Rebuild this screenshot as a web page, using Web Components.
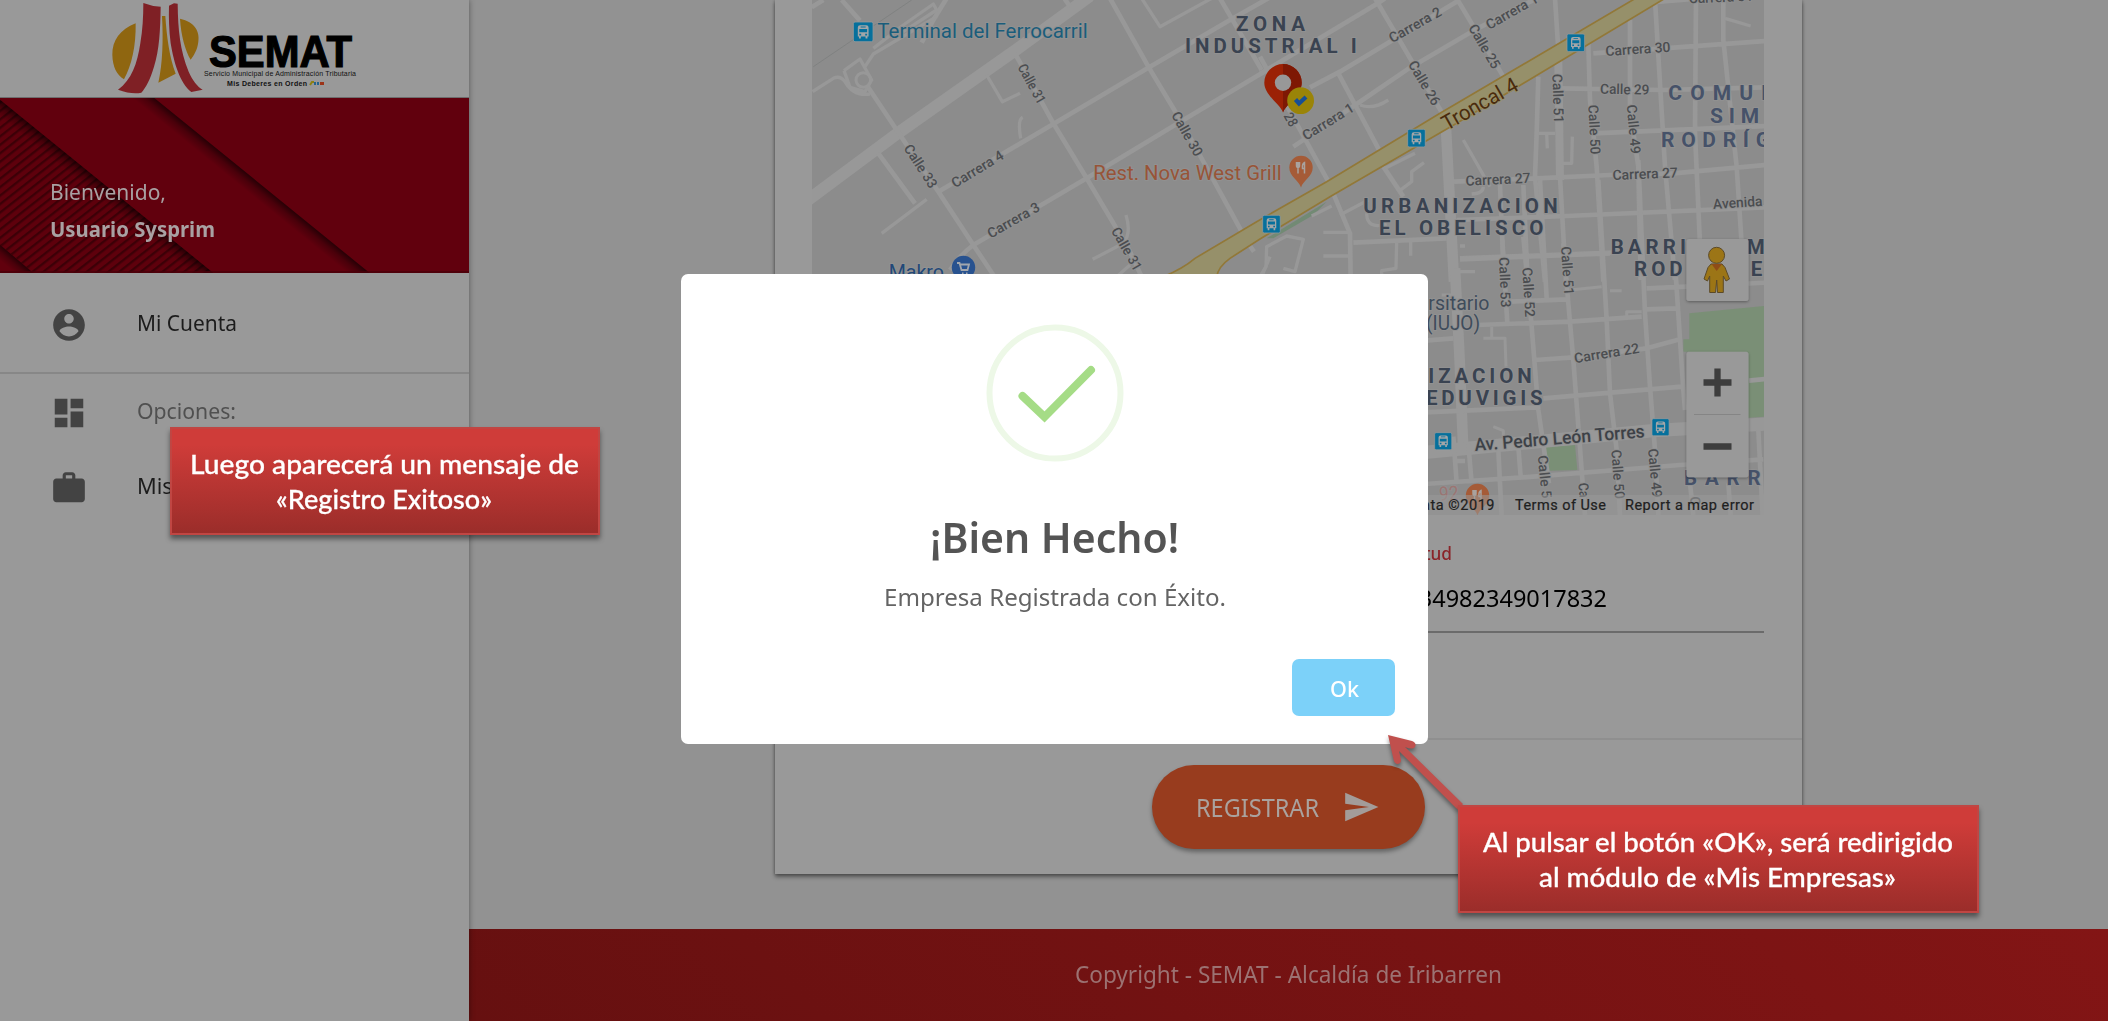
<!DOCTYPE html>
<html lang="es">
<head>
<meta charset="utf-8">
<title>SEMAT</title>
<style>
html,body{margin:0;height:100%;overflow:hidden;background:#929292;font-family:"Noto Sans","Open Sans",sans-serif}
</style>
</head>
<body>
<semat-app></semat-app>
<script>
const define=(name,html,setup)=>{
  const t=document.createElement('template');
  t.innerHTML=html;
  customElements.define(name,class extends HTMLElement{
    connectedCallback(){
      if(this.shadowRoot)return;
      this.attachShadow({mode:'open'}).append(t.content.cloneNode(true));
      if(setup)setup.call(this,this.shadowRoot);
    }
  });
};

/* One line of text condensed or widened to a given width */
define('fit-text',`<style>:host{display:block;white-space:nowrap}span{display:inline-block;transform-origin:0 50%}</style><span><slot></slot></span>`,function(root){
  const w=+this.getAttribute('w'),s=root.querySelector('span');
  this.style.width=w+'px';
  s.style.transform='scaleX('+w/s.getBoundingClientRect().width+')';
});

define('semat-logo',`<style>:host{display:block;height:97px;background:#999;border-bottom:1px solid #6d6d6d}svg{display:block}</style>
<svg width="469" height="97" viewBox="0 0 469 97">
<g transform="translate(100 0) scale(.33333)">
<path fill="#8f6610" d="M107 70C60 88 36 122 37 165C38 200 50 225 72 238C95 195 108 140 107 70ZM186 48L196 48C200 110 208 170 227 221L175 248C188 190 190 120 186 48ZM240 56C285 66 300 95 295 125C292 150 282 165 272 179C255 150 243 105 240 56Z"/>
<path fill="#7f2025" d="M130 9Q155 19 182 20C181 90 178 150 162 200C150 240 138 262 124 278Q95 284 54 269C95 240 112 190 121 130C128 90 130 50 130 9ZM207 17L222 10L233 11C234 90 240 150 266 215C278 242 292 260 308 269L274 276C240 250 222 190 212 130C207 90 206 50 207 17Z"/></g>
<text x="209" y="67" font-family="Liberation Sans" font-weight="700" font-size="43.5" textLength="143" lengthAdjust="spacingAndGlyphs" fill="#000" stroke="#000" stroke-width="1.2">SEMAT</text>
<text x="204" y="76" font-family="Liberation Sans" font-size="7" textLength="152" fill="#111">Servicio Municipal de Administración Tributaria</text>
<text x="227" y="86" font-family="Liberation Sans" font-weight="700" font-size="7" textLength="80" fill="#111">Mis Deberes en Orden</text>
<path d="M310 85l2-3 2 0" stroke="#8f8010" stroke-width="2" fill="none"/><path d="M315 85v-3M318 85v-3" stroke="#25638f" stroke-width="2"/><path d="M321 85v-3M323 85v-3" stroke="#9c3418" stroke-width="2"/>
</svg>`);

define('welcome-banner',`<style>:host{display:grid;height:175px;color:#a9a1a3;font-size:22px;line-height:37px}
svg,div{grid-area:1/1}div{padding:75px 0 0 50px}b{display:block}</style>
<svg width="469" height="175" viewBox="0 295 1407 525">
<defs><pattern id="p" width="20" height="20" patternUnits="userSpaceOnUse" patternTransform="rotate(-38)"><rect width="20" height="20" fill="#5e000c"/><rect width="20" height="7" fill="#3c0007"/></pattern>
<linearGradient id="s" x2="0" y2="1"><stop stop-opacity=".6"/><stop offset=".45" stop-opacity=".24"/><stop offset="1" stop-opacity="0"/></linearGradient></defs>
<rect y="295" width="1407" height="525" fill="#61000d"/>
<path d="M0 300L640 820H100L0 735Z" fill="url(#p)"/>
<rect width="1000" height="40" x="-60" fill="url(#s)" transform="translate(0 300) rotate(39.1)"/>
<rect width="1000" height="42" x="-60" fill="url(#s)" transform="translate(463 295) rotate(39.1)"/>
<path d="M0 735L100 820H0Z" fill="#61000d"/>
<rect width="1000" height="36" x="-60" fill="url(#s)" transform="translate(0 735) rotate(40.4)"/>
<path d="M0 817H1407" stroke="#4a000a" stroke-width="4"/>
</svg>
<div><fit-text w="116">Bienvenido,</fit-text><fit-text w="165"><b>Usuario Sysprim</b></fit-text></div>`);

const ICONS={
account:'M12 2C6.48 2 2 6.48 2 12s4.48 10 10 10 10-4.48 10-10S17.52 2 12 2zm0 3c1.66 0 3 1.34 3 3s-1.34 3-3 3-3-1.34-3-3 1.34-3 3-3zm0 14.2c-2.5 0-4.71-1.28-6-3.22.03-1.99 4-3.08 6-3.08 1.99 0 5.97 1.09 6 3.08-1.29 1.94-3.5 3.22-6 3.22z',
dashboard:'M3 13h8V3H3v10zm0 8h8v-6H3v6zm10 0h8V11h-8v10zm0-18v6h8V3h-8z',
work:'M20 6h-4V4c0-1.11-.89-2-2-2h-4c-1.11 0-2 .89-2 2v2H4c-1.11 0-1.99.89-1.99 2L2 19c0 1.11.89 2 2 2h16c1.11 0 2-.89 2-2V8c0-1.11-.89-2-2-2zm-6 0h-4V4h4v2z',
send:'M2.01 21L23 12 2.01 3 2 10l15 2-15 2z'};
define('nav-row',`<style>:host{display:flex;align-items:center;height:75px;padding-left:50px;gap:49px;font-size:21px;line-height:30px;color:#1c1c1c}
:host([muted]){color:#505050}svg{width:38px;height:38px;fill:#434343;flex:none}div{padding-bottom:3px}</style><svg viewBox="0 0 24 24"><path/></svg><div><slot></slot></div>`,function(r){
  r.querySelector('path').setAttribute('d',ICONS[this.getAttribute('icon')]);
});

define('side-nav',`<style>:host{display:block;width:469px;height:1021px;background:#999;box-shadow:0 0 6px rgba(0,0,0,.4);position:relative}
.top{padding:14px 0 10px;border-bottom:2px solid #878787}.opts{padding-top:1px}</style>
<semat-logo></semat-logo><welcome-banner></welcome-banner>
<div class="top"><nav-row icon="account"><fit-text w="100">Mi Cuenta</fit-text></nav-row></div>
<div class="opts"><nav-row icon="dashboard" muted><fit-text w="99">Opciones:</fit-text></nav-row><nav-row icon="work"><fit-text w="141">Mis Empresas</fit-text></nav-row></div>`);

/* Street map. Each sheet is drawn at three times its size and moved to its place */
const SHEETS={a:[770,0],b:[1260,0],c:[1400,270]};
const DARK='#3a4351',BLUE='#465269',GREY='#4b4d50';
const LABELS=[
['a','Terminal del Ferrocarril',322,115,953,115,21,400,'#1a5d7b'],
['a','Calle 31',742,202,804,315],['a','Calle 33',400,445,480,568],['a','Calle 30',1203,345,1275,472],['a','Calle 31',1022,692,1093,816],
['a','Carrera 4',555,565,705,474],['a','Carrera 3',662,716,813,630],
['a','Makro',356,836,522,836,21,400,'#214878'],
['a','Rest. Nova West Grill',970,541,1535,541,20.5,400,'#985437'],
['a','ZONA',1398,94,1605,94,20.5,700,DARK,1],['a','INDUSTRIAL I',1245,158,1760,158,20.5,700,DARK,1],
['b','Carrera 2',397,130,548,44],['b','Carrera 1',688,90,838,5],['b','Calle 25',624,83,698,210],['b','Calle 26',443,193,518,320],
['b','Troncal 4',560,393,780,268,21,400,'#4a2b0c'],['b','Carrera 1',138,422,286,332],['b','28',70,347,90,384],
['b','Calle 51',877,222,882,370],['b','Calle 50',985,315,992,464],['b','Calle 49',1100,315,1113,463],
['b','Carrera 30',1037,168,1232,155],['b','Calle 29',1020,281,1168,284],['b','Carrera 27',617,557,812,548],['b','Carrera 27',1058,540,1254,532],['b','Avenida',1360,627,1508,617],['b','Carrera 31',1287,10,1480,2],
['b','COMUN',1225,300,1560,300,21,700,BLUE,1],['b','SIM',1350,370,1508,370,21,700,BLUE,1],['b','RODRÍG',1203,440,1545,440,21,700,BLUE,1],
['b','URBANIZACION',310,640,893,640,20.5,700,DARK,1],['b','EL OBELISCO',357,706,850,706,20.5,700,DARK,1],
['b','BARRI',1052,762,1278,762,20.5,700,DARK,1],['b','M',1460,762,1505,762,20.5,700,DARK,1],['b','ROD',1122,827,1268,827,20.5,700,DARK,1],['b','E',1472,827,1503,827,20.5,700,DARK,1],
['c','rsitario',85,120,268,120,20.5,400,'#3f4c5b'],['c','(IUJO)',78,181,240,181,20.5,400,'#3f4c5b'],
['c','Calle 53',297,-38,303,113],['c','Calle 52',367,-7,376,142],['c','Calle 51',483,-70,493,76],
['c','Carrera 22',525,280,720,248],
['c','IZACION',85,340,395,340,20.5,700,DARK,1],['c','EDUVIGIS',78,406,428,406,20.5,700,DARK,1],
['c','Av. Pedro León Torres',225,543,735,502,18,500,'#3d4147'],
['c','Calle 5',413,557,426,686],['c','Calle 50',634,540,645,688],['c','Calle 49',744,537,757,684],['c','Ca',535,640,539,684],['c','C',870,680,872,706],
['c','BARR',852,646,1082,646,20.5,700,BLUE,1],
['c','92',118,692,176,690,20,400,'#9a7573']];
const SPACING={COMUN:8.1,'RODRÍG':6.7,SIM:5.8};
const bus=(s,x,y,k=1)=>`<g transform="translate(${SHEETS[s][0]+x/3} ${SHEETS[s][1]+y/3}) scale(${k})"><rect width="17.6" height="17.6" rx="1.5" fill="#06709c" stroke="#9b9b9b" stroke-width=".7"/><path fill="#a2a6a8" d="M4 5Q4 3 6 3H11.6Q13.600 3 13.600 5V13H12.600V14.800H10.900V13H6.700V14.800H5V13H4Z"/><path fill="#06709c" d="M5.300 6.200H12.300V9.200H5.300ZM5.300 10.500H7V12H5.300ZM10.600 10.500H12.300V12H10.600ZM6.500 4H11V4.800H6.500Z"/></g>`;
const food=(x,y)=>`<g transform="translate(${x} ${y})"><path fill="#a55b37" d="M0 20C-2 13-11.700 9-11.700 0A11.700 11.700 0 0 1 11.700 0C11.700 9 2 13 0 20Z"/><path d="M-4.500-5.500V-2Q-4.500 0-3 0V6M-1.500-5.500V-2Q-1.500 0-3 0M-3-5.500V0M3.500 6V-5Q1-4 1.500 1H3.500" fill="none" stroke="#a9a29e" stroke-width="1.500"/></g>`;
define('street-map',`<style>:host{display:block;width:952px;height:515px}svg{display:block}text{font-family:Roboto,sans-serif}</style>
<svg width="952" height="515" viewBox="812 0 952 515">
<defs><filter id="d" x="-20%" y="-20%" width="140%" height="150%"><feDropShadow dx="0" dy="1" stdDeviation="1.500" flood-opacity=".35"/></filter></defs>
<rect x="812" width="952" height="515" fill="#8c8c8c"/>
<g fill="none" stroke="#989898" stroke-width="14" stroke-linejoin="round">
<g transform="translate(770 0) scale(.33333)">
<path d="M130 200L425 0" stroke="#7f8281" stroke-width="3"/>
<path stroke-width="36" d="M90 618L380 402L740 148L960-12"/>
<path d="M125 22L160 0M215 0L270 62M290 255L380 390L505 575L610 735L672 828M325 460L435 610M735 160L850 370L950 535L1075 745L1115 830M505 575L850 372L1135 203L1380 60L1500-8M540 810Q570 765 610 735L950 535L1240 360L1500 205M1020-5L1135 200L1240 375L1418 700M1350-5L1475 210M883-5L900 20M530-5L490 60L455 128M1438 735L1452 755"/>
<path stroke-width="10" d="M128 275L190 235Q210 225 225 245Q250 290 300 282M222 212L270 177L305 240L285 275L240 262L222 212M285 200L310 162L500 50M310 145L400 75L490 12L500 30L400 95M335 700L470 598M650 225L697 305L750 280M758 352Q742 360 752 415M1115-5L1170 80L1325-5M968 778L1060 730Q1085 700 1068 645M1040 830L1080 795M1475 830L1500 770"/>
<circle cx="280" cy="240" r="22" stroke-width="9"/></g>
<g transform="translate(1260 0) scale(.33333)">
<path fill="#728a74" stroke="none" d="M20 715L200 605L160 645L40 715Z"/>
<path d="M0 170L205 545L270 700L272 840M0 222L350 12L375-5M150 262L240 215L590 5M100 440L290 312L450 203L640 92L830-5M345-5L550 345M235 220L360 455M370 500L430 590M590-5L735 238M885-5L895 150M580 545L830 535L1050 525L1240 520L1515 495M590 660L920 648L1515 622M600 775L1060 758M985 130L990 300L1010 500L1030 845M1110 60L1110 330L1135 500L1142 840M1185 0L1215 500L1245 840M1308-5L1305 400L1325 845M1390-5L1390 120L1430 500L1452 840M1000 160L1515 123M900 265L1210 270L1515 262M1000 400L1515 378M835 230L830 400L825 530L855 845M790 555L803 845M720 555L732 845M280 728L560 715M1190 6L1310-4"/>
<path stroke-width="24" d="M895 180L900 540"/><path d="M900 530L918 845"/>
<path stroke-width="32" d="M558 385L582 845"/>
<path stroke-width="10" d="M300 315Q340 330 385 300M1395 55L1472 78M835 400H885M860 400L862 445M937 410L935 490H905M610 420L690 560M670 560Q670 580 635 582M465 460L375 505M492 488L455 515V545L415 575M240 645L325 600M155 648L215 618M320 640Q320 690 380 672M190 697H270M190 768H270M410 728L408 805L365 812V840M452 725V767M600 738H615M600 815H645M0 830L18 800L20 740L80 708L130 718L105 815L70 805"/></g>
<g transform="translate(1400 270) scale(.33333)">
<path fill="#74906f" fill-opacity=".75" stroke="none" d="M868 130L1093 108V440L868 455ZM850 208H875V245H850ZM435 530L525 525L532 600L445 602Z"/>
<path stroke-width="32" d="M165-5L178 250L190 545"/>
<path stroke-width="40" d="M75 547L760 482L1095 462"/>
<path d="M75 212L160 205M230 165L510 155L725 140M307-90L322 160M370-100L395 170L415 420L447 640M420-270L440 85M490-80L505 100L520 270L548 640L555 735M595-270L620 150L630 370L650 540L660 735M715-330L735 130L750 350L765 540L775 735M825-20L850 360L855 420M330 95L500 88M180-32L630-50M740 55L860 50L1095 38M740 118L830 115M405 270L520 262L740 235L840 208M430 385L845 350M75 427L420 412M75 642L400 620L840 585L1090 568M160 500L170 640M205 520L215 640M295 540L305 740M355 530L362 620M160 573H195M870 640L880 735M985 640L992 735M1047 332L1095 327M1075 480L1088 735"/>
<path stroke-width="9" d="M275 170V203M250 205H315L318 290M510 60L605 50M630 62H665M680 140V125H725M280 470L310 482V500M125 75H160"/>
</g></g>
<g transform="translate(1260 0) scale(.33333)"><path fill="#96906a" stroke="#927838" stroke-width="5" d="M1135-10L540 340L200 545L-10 665L-195 775Q-230 805-290 830H-130Q-125 800-90 775L0 717L210 590L370 497L590 370L1215-5Z"/></g>
<g id="labels"></g>
${bus('a',250,66,1.12)}${bus('b',921,102)}${bus('b',443,388)}${bus('b',8,646)}${bus('c',104,488,.97)}${bus('c',756,446,.97)}
<circle cx="963.500" cy="267.500" r="11.700" fill="#28528f"/><path d="M957 263H959.500L961.500 270H967.500L969 264.500H960.500M962 273.500h1.500M966 273.500h1.500" fill="none" stroke="#a2a7ae" stroke-width="1.800"/>
${food(1301,167.5)}${food(1477.5,495.5)}
<path fill="#9b2105" d="M1283 112.500C1280 104 1264.300 95 1264.300 82.700A18.700 18.700 0 0 1 1301.700 82.700C1301.700 95 1286 104 1283 112.500Z"/><path fill="#7e1804" d="M1283 64A18.700 18.700 0 0 1 1301.700 82.700C1301.700 95 1286 104 1283 112.500Z"/><circle cx="1283" cy="82.700" r="8.200" fill="#989898"/>
<circle cx="1300.600" cy="100.700" r="13.400" fill="#9a8408"/><path d="M1295.500 99.500L1299 103.500L1306 97" fill="none" stroke="#174f96" stroke-width="4.200"/>
<rect x="1425" y="495" width="339" height="20" fill="#999" fill-opacity=".55"/>
<g font-size="14.500" fill="#202020" stroke="#202020" stroke-width=".2"><text x="1422" y="510" textLength="72.500">ata ©2019</text><text x="1515" y="510" textLength="91">Terms of Use</text><text x="1625" y="510" textLength="129">Report a map error</text></g>
<g filter="url(#d)" fill="#999"><rect x="1686.500" y="239" width="62" height="62" rx="2.500"/><rect x="1686.500" y="351.700" width="62" height="125.600" rx="2.500"/></g>
<g stroke="#5c4a28" stroke-width="1"><path fill="#9c7516" d="M1711 264H1722L1725 267.500L1729.500 279L1726 281L1723.300 276V292.500H1717.500L1716.700 280L1715.500 292.500H1709.700V276L1707.500 281L1704 279L1708 267.500Z"/><circle cx="1716.600" cy="255.300" r="8" fill="#9c7516"/></g><path fill="#8f4c17" d="M1711.500 264H1722L1716.700 271Z"/>
<path d="M1703.500 382.500H1731.500M1717.500 368.500V396.500M1703.500 446.500H1731.500" stroke="#3d3d3d" stroke-width="6.300"/><path d="M1694 414.500H1740.500" stroke="#858585"/>
</svg>`,function(r){
  const g=r.getElementById('labels');
  for(const [s,text,x1,y1,x2,y2,size=14,weight=500,fill=GREY,spaced] of LABELS){
    const t=document.createElementNS('http://www.w3.org/2000/svg','text');
    const [ox,oy]=SHEETS[s];
    t.textContent=text;
    const at={transform:`translate(${ox+x1/3} ${oy+y1/3}) rotate(${Math.atan2(y2-y1,x2-x1)*180/Math.PI})`,'font-size':size,'font-weight':weight,fill,
      stroke:text==='Troncal 4'?'#96906a':'#919191','stroke-width':2,'paint-order':'stroke'};
    if(SPACING[text])at['letter-spacing']=SPACING[text];
    else if(text.length>1){
      at.textLength=Math.hypot(x2-x1,y2-y1)/3;
      at.lengthAdjust=spaced?'spacing':'spacingAndGlyphs';
    }
    for(const k in at)t.setAttribute(k,at[k]);
    g.append(t);
  }
});

define('coordinate-field',`<style>:host{display:flex;flex-direction:column;align-items:flex-start;border-bottom:2px solid #6b6b6b;height:116px;box-sizing:border-box;color:#000}
:host(.inset){padding-left:76px}
label{font-size:18px;line-height:24px;color:#8a2429;padding-top:24px;font-weight:500}span{font-size:23.500px;line-height:34px;padding-top:16px;white-space:nowrap}</style>
<label><slot name="label"></slot></label><span><slot></slot></span>`);

define('register-button',`<style>:host{display:flex;align-items:center;box-sizing:border-box;width:273px;height:84px;border-radius:42px;background:#983c1e;padding-left:44px;gap:23px;color:#aaa29e;font-size:25px;line-height:36px;box-shadow:0 3px 4px rgba(0,0,0,.35)}svg{width:38px;height:38px;fill:#a39c99}</style>
<fit-text w="123">REGISTRAR</fit-text><svg viewBox="0 0 24 24"><path d="${ICONS.send}"/></svg>`);

define('company-card',`<style>:host{display:flex;flex-direction:column;width:1027px;height:874px;background:#999;box-shadow:0 3px 4px rgba(0,0,0,.4),0 0 3px rgba(0,0,0,.3)}
.body{padding:0 38px 0 37px;height:738px}.fields{display:grid;grid-template-columns:1fr 1fr;column-gap:28px;margin-top:2px}
.action{border-top:2px solid #8f8f8f;display:flex;justify-content:center;padding-top:25px}</style>
<div class="body"><street-map></street-map><div class="fields"><coordinate-field><fit-text slot="label" w="60">Latitud</fit-text>10.0736954</coordinate-field><coordinate-field class="inset"><fit-text slot="label" w="74">Longitud</fit-text><fit-text w="229">-69.34982349017832</fit-text></coordinate-field></div></div>
<div class="action"><register-button></register-button></div>`);

define('page-footer',`<style>:host{display:flex;justify-content:center;height:92px;background:linear-gradient(45deg,#661010,#831515);color:#9c7272;font-size:23.500px;line-height:91px}</style><fit-text w="427">Copyright - SEMAT - Alcaldía de Iribarren</fit-text>`);

define('success-dialog',`<style>:host{display:flex;flex-direction:column;align-items:center;box-sizing:border-box;width:747px;height:470px;border-radius:7px;background:#fff;padding-top:50px}
svg{display:block}.t{font-size:41px;font-weight:600;line-height:50px;color:#545454;margin-top:50px}.m{font-size:23.500px;line-height:34px;color:#646464;margin-top:18px}
button{align-self:flex-end;display:flex;justify-content:center;align-items:center;margin:45px 33px 0 0;width:103px;height:56.500px;padding:3px 0 0 1px;border:0;border-radius:7px;background:#7cd1f9;color:#fff;font:500 21px/30px "Noto Sans",sans-serif}</style>
<svg width="138" height="138" viewBox="0 0 138 138"><circle cx="69" cy="69" r="65.500" fill="none" stroke="#edf8e7" stroke-width="6"/><path d="M36.500 72L58.500 93L105 46" fill="none" stroke="#a5dc86" stroke-width="8" stroke-linecap="round"/></svg>
<fit-text class="t" w="249">¡Bien Hecho!</fit-text><fit-text class="m" w="342">Empresa Registrada con Éxito.</fit-text><button><fit-text w="29">Ok</fit-text></button>`);

define('red-callout',`<style>:host{display:flex;flex-direction:column;align-items:center;justify-content:center;box-sizing:border-box;height:108px;border:2px solid #c04643;background:linear-gradient(#cf3c39 15%,#9b2d2a);color:#fff;font:500 26.500px/35px Lato,sans-serif;-webkit-text-stroke:.3px #fff;box-shadow:0 4px 5px rgba(0,0,0,.45);padding:2px 2px 0 0}</style><slot></slot>`);

define('semat-app',`<style>:host{display:flex;width:2108px;height:1021px;position:relative;overflow:hidden}
main{flex:1;display:flex;flex-direction:column;min-width:0}.content{height:929px;display:flex;justify-content:center}
success-dialog{position:absolute;left:681px;top:274px}
.one{position:absolute;left:170px;top:427px;width:430px}.two{position:absolute;left:1458px;top:805px;width:521px}
.arrow{position:absolute;left:1375px;top:725px;filter:drop-shadow(0 3px 2px rgba(0,0,0,.4))}</style>
<side-nav></side-nav><main><div class="content"><company-card></company-card></div><page-footer></page-footer></main>
<success-dialog></success-dialog>
<svg class="arrow" width="100" height="90" viewBox="1375 725 100 90"><path fill="#c0504d" d="M1388 735L1412 741Q1417 743 1415 747Q1413 750 1405 747L1463 804L1458 810L1399 751L1401 760Q1401 764 1397 764Q1394 763 1393.500 759Z"/></svg>
<red-callout class="one"><fit-text w="389">Luego aparecerá un mensaje de</fit-text><fit-text w="216">«Registro Exitoso»</fit-text></red-callout>
<red-callout class="two"><fit-text w="470">Al pulsar el botón «OK», será redirigido</fit-text><fit-text w="357">al módulo de «Mis Empresas»</fit-text></red-callout>`);
</script>
</body>
</html>
